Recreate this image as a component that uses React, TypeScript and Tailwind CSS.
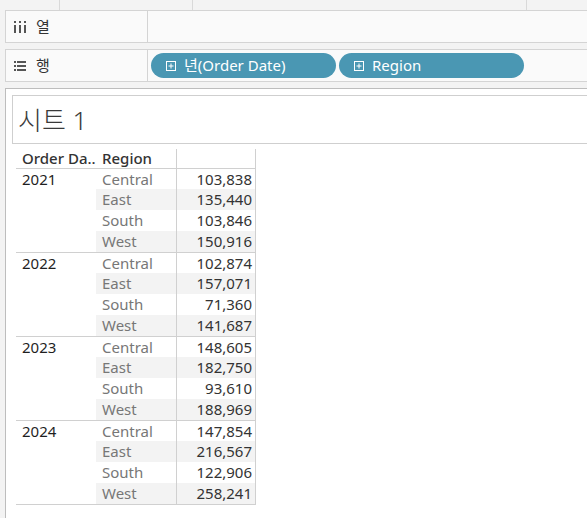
import React from 'react';

type Row = { region: string; value: string };
type Group = { year: string; rows: Row[] };

const data: Group[] = [
  { year: '2021', rows: [
    { region: 'Central', value: '103,838' },
    { region: 'East', value: '135,440' },
    { region: 'South', value: '103,846' },
    { region: 'West', value: '150,916' },
  ] },
  { year: '2022', rows: [
    { region: 'Central', value: '102,874' },
    { region: 'East', value: '157,071' },
    { region: 'South', value: '71,360' },
    { region: 'West', value: '141,687' },
  ] },
  { year: '2023', rows: [
    { region: 'Central', value: '148,605' },
    { region: 'East', value: '182,750' },
    { region: 'South', value: '93,610' },
    { region: 'West', value: '188,969' },
  ] },
  { year: '2024', rows: [
    { region: 'Central', value: '147,854' },
    { region: 'East', value: '216,567' },
    { region: 'South', value: '122,906' },
    { region: 'West', value: '258,241' },
  ] },
];

const ColumnsIcon = () => (
  <svg width="12" height="12" viewBox="0 0 12 12" fill="#555">
    <rect x="0" y="0" width="2" height="2" />
    <rect x="5" y="0" width="2" height="2" />
    <rect x="10" y="0" width="2" height="2" />
    <rect x="0" y="4" width="2" height="8" />
    <rect x="5" y="4" width="2" height="8" />
    <rect x="10" y="4" width="2" height="8" />
  </svg>
);

const RowsIcon = () => (
  <svg width="12" height="10" viewBox="0 0 12 10" fill="#555">
    <rect x="0" y="0" width="2" height="2" />
    <rect x="3" y="0" width="9" height="2" />
    <rect x="0" y="4" width="2" height="2" />
    <rect x="3" y="4" width="9" height="2" />
    <rect x="0" y="8" width="2" height="2" />
    <rect x="3" y="8" width="9" height="2" />
  </svg>
);

const PlusBox = () => (
  <svg width="10" height="10" viewBox="0 0 10 10" fill="none" stroke="white" strokeWidth="1">
    <rect x="0.5" y="0.5" width="9" height="9" />
    <path d="M5 2.5v5M2.5 5h5" />
  </svg>
);

const Pill: React.FC<{ label: string }> = ({ label }) => (
  <div className="w-[185px] h-[25px] rounded-full bg-[#4a97b3] flex items-center pl-[15px] gap-[8px] text-white text-[15px] shrink-0">
    <PlusBox />
    <span className="leading-none">{label}</span>
  </div>
);

export default function App() {
  return (
    <div
      className="w-[587px] h-[518px] overflow-hidden bg-[#f3f3f3] text-[#333]"
      style={{ fontFamily: '"Noto Sans", "Noto Sans CJK KR", sans-serif' }}
    >
      {/* top strip */}
      <div className="h-[10px] flex">
        <div className="w-[60px] border-r border-[#d9d9d9]" />
        <div className="w-[133px] border-r border-[#d9d9d9]" />
        <div className="w-[334px] border-r border-[#d9d9d9]" />
      </div>

      {/* shelves */}
      <div className="pl-[5px] flex flex-col gap-[6px]">
        <div className="h-[33px] flex border border-r-0 border-[#d4d4d4] bg-[#fafafa]">
          <div className="w-[142px] border-r border-[#d4d4d4] flex items-center pl-[8px] gap-[10px]">
            <ColumnsIcon />
            <span className="text-[15px]">열</span>
          </div>
          <div className="flex-1" />
        </div>
        <div className="h-[33px] flex border border-r-0 border-[#d4d4d4] bg-[#fafafa]">
          <div className="w-[142px] border-r border-[#d4d4d4] flex items-center pl-[8px] gap-[10px]">
            <RowsIcon />
            <span className="text-[15px]">행</span>
          </div>
          <div className="flex-1 flex items-center pl-[3px] gap-[3px]">
            <Pill label="년(Order Date)" />
            <Pill label="Region" />
          </div>
        </div>
      </div>

      {/* sheet */}
      <div className="mt-[6px] ml-[5px] h-[500px] border-l border-t border-[#bdbdbd] bg-white pl-[6px] pt-[6px]">
        <div className="h-[49px] border border-r-0 border-[#cfcfcf] flex items-center pl-[5px]">
          <span className="text-[26px] font-light text-[#3a3a3a] leading-none">시트 1</span>
        </div>

        <div className="ml-[4px] mt-[4px] w-[240px] text-[15px]">
          <div className="h-[21px] flex border-b border-[#d0d0d0] font-medium">
            <div className="w-[80px] pl-[6px] leading-[21px] whitespace-nowrap">Order Da..</div>
            <div className="w-[80px] pl-[6px] leading-[21px]">Region</div>
            <div className="w-[80px] border-l border-r border-[#d0d0d0] mt-[1px]" />
          </div>
          {data.map((g) => (
            <div key={g.year} className="flex border-b border-[#d0d0d0]">
              <div className="w-[80px] pl-[6px] text-[#1f1f1f] leading-[20px]">{g.year}</div>
              <div className="flex flex-col">
                {g.rows.map((r, i) => (
                  <div
                    key={r.region}
                    className={`flex ${i === 0 ? 'h-[20px]' : 'h-[21px]'} ${i % 2 === 1 ? 'bg-[#f3f3f3]' : ''}`}
                  >
                    <div className="w-[80px] pl-[6px] text-[#777] leading-[20px]">{r.region}</div>
                    <div className="w-[80px] border-l border-r border-[#d0d0d0] text-right pr-[3px] text-[#333] leading-[20px]">
                      {r.value}
                    </div>
                  </div>
                ))}
              </div>
            </div>
          ))}
        </div>
      </div>
    </div>
  );
}
